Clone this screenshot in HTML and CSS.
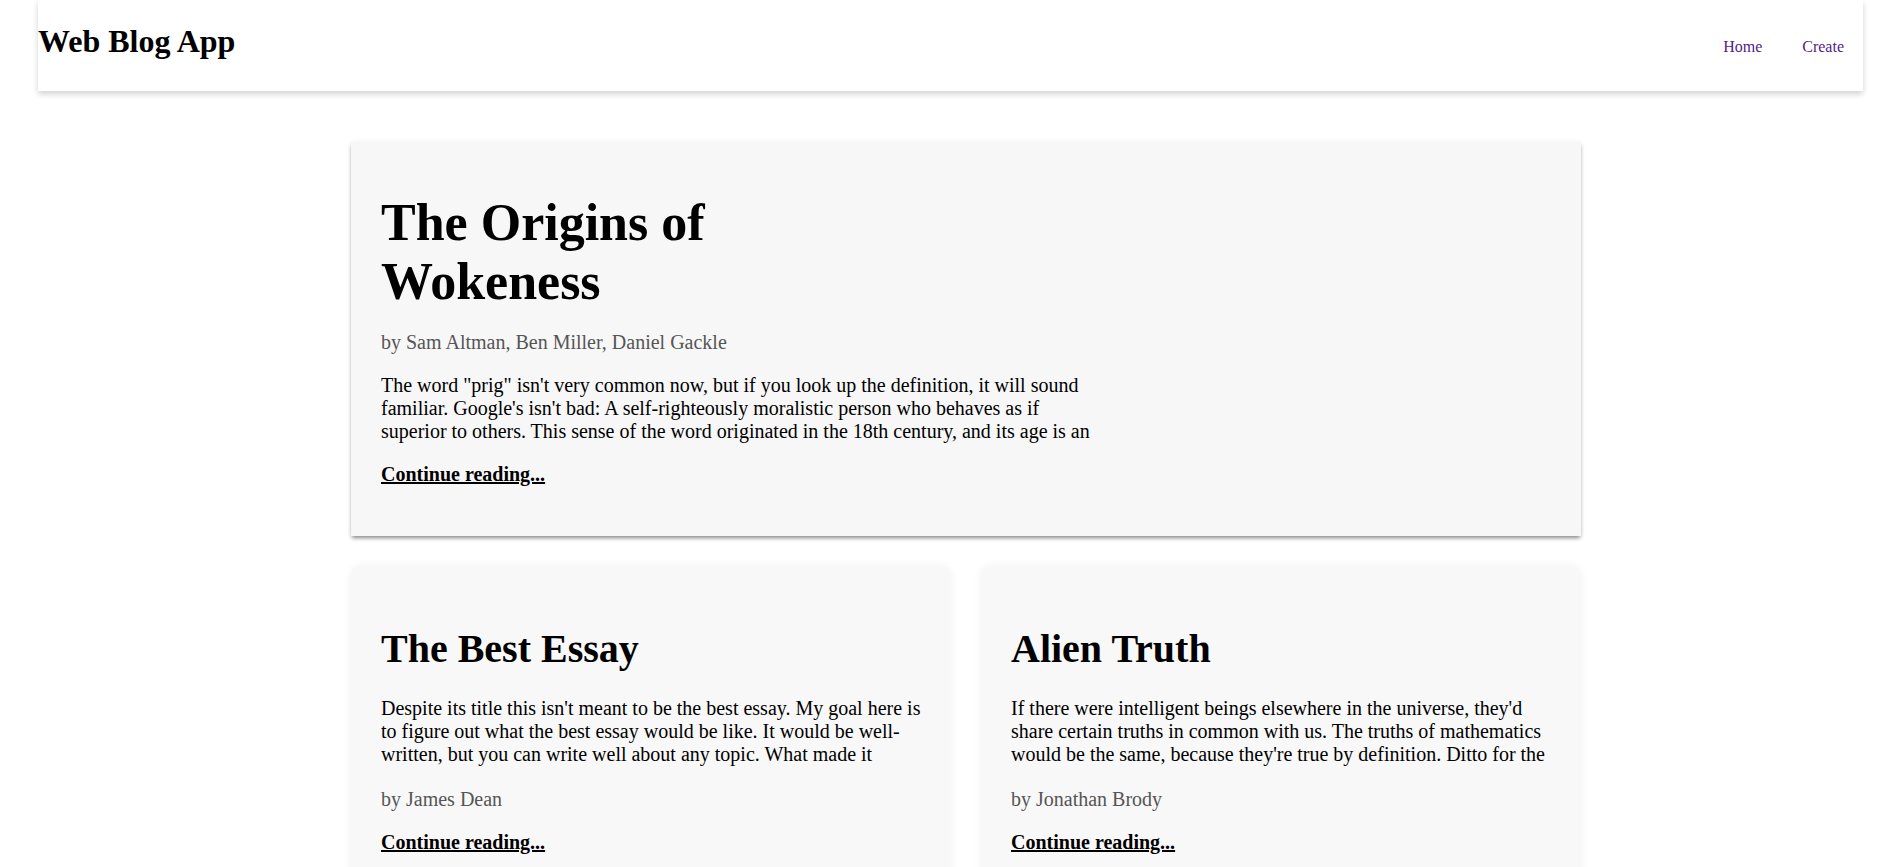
FILE: index.html
```html
<!DOCTYPE html>
<html lang="en">
<head>
<meta charset="utf-8">
<title>Web Blog App</title>
<link rel="stylesheet" href="styles.css">
</head>
<body>
<nav class="navbar">
  <h1 class="brand">Web Blog App</h1>
  <div class="links">
    <a href="#" class="nav-link">Home</a>
    <a href="#" class="nav-link">Create</a>
  </div>
</nav>
<main class="main">
  <article class="featured">
    <h1 class="featured-title">The Origins of Wokeness</h1>
    <p class="author">by Sam Altman, Ben Miller, Daniel Gackle</p>
    <p class="excerpt featured-excerpt">The word "prig" isn't very common now, but if you look up the definition, it will sound familiar. Google's isn't bad: A self-righteously moralistic person who behaves as if superior to others. This sense of the word originated in the 18th century, and its age is an</p>
    <a href="#" class="more">Continue reading...</a>
  </article>
  <div class="grid">
    <article class="card">
      <h2 class="card-title">The Best Essay</h2>
      <p class="excerpt card-excerpt">Despite its title this isn't meant to be the best essay. My goal here is to figure out what the best essay would be like. It would be well-written, but you can write well about any topic. What made it</p>
      <p class="author">by James Dean</p>
      <a href="#" class="more">Continue reading...</a>
    </article>
    <article class="card">
      <h2 class="card-title">Alien Truth</h2>
      <p class="excerpt card-excerpt">If there were intelligent beings elsewhere in the universe, they'd share certain truths in common with us. The truths of mathematics would be the same, because they're true by definition. Ditto for the</p>
      <p class="author">by Jonathan Brody</p>
      <a href="#" class="more">Continue reading...</a>
    </article>
  </div>
</main>
</body>
</html>
```

FILE: styles.css
```css
html, body {
  margin: 0;
  padding: 0;
  background: #ffffff;
  font-family: "Liberation Serif", "Times New Roman", serif;
  color: #000;
}

.navbar {
  box-sizing: border-box;
  height: 91px;
  margin: 0 34px 0 38px;
  padding: 23px 19px 0 0;
  background: #fff;
  display: flex;
  align-items: baseline;
  justify-content: space-between;
  box-shadow: 0 3px 6px rgba(0, 0, 0, 0.18);
}

.brand {
  margin: 0;
  font-size: 32px;
  font-weight: bold;
}

.links {
  display: flex;
  gap: 40px;
}

.nav-link {
  font-size: 16px;
  color: #551a8b;
  text-decoration: none;
}

.main {
  width: 1230px;
  margin: 51px 0 0 351px;
  display: flex;
  flex-direction: column;
  gap: 30px;
}

.featured {
  background: #f7f7f7;
  padding: 31px 30px 30px;
  box-shadow: 0 3px 4px -1px rgba(0, 0, 0, 0.45), 0 0 6px rgba(0, 0, 0, 0.06);
}

.featured-title {
  margin: 20px 0;
  max-width: 450px;
  font-size: 52px;
  line-height: 59px;
  font-weight: bold;
}

.author {
  margin: 20px 0;
  font-size: 20px;
  line-height: 23px;
  color: #555;
}

.excerpt {
  margin: 20px 0;
  font-size: 20px;
  line-height: 23px;
  max-height: 69px;
  overflow: hidden;
}

.featured-excerpt {
  max-width: 715px;
}

.card-excerpt {
  margin-bottom: 22px;
}

.more {
  display: inline-block;
  margin: 0 0 20px;
  font-size: 20px;
  line-height: 23px;
  font-weight: bold;
  color: #000;
  text-decoration: underline;
}

.grid {
  display: grid;
  grid-template-columns: 1fr 1fr;
  gap: 30px;
}

.card {
  background: #f8f8f8;
  border-radius: 10px;
  padding: 30px;
  box-shadow: 0 0 10px rgba(0, 0, 0, 0.06);
}

.card-title {
  margin: 30px 0 25px;
  font-size: 40px;
  line-height: 46px;
  font-weight: bold;
}
```
